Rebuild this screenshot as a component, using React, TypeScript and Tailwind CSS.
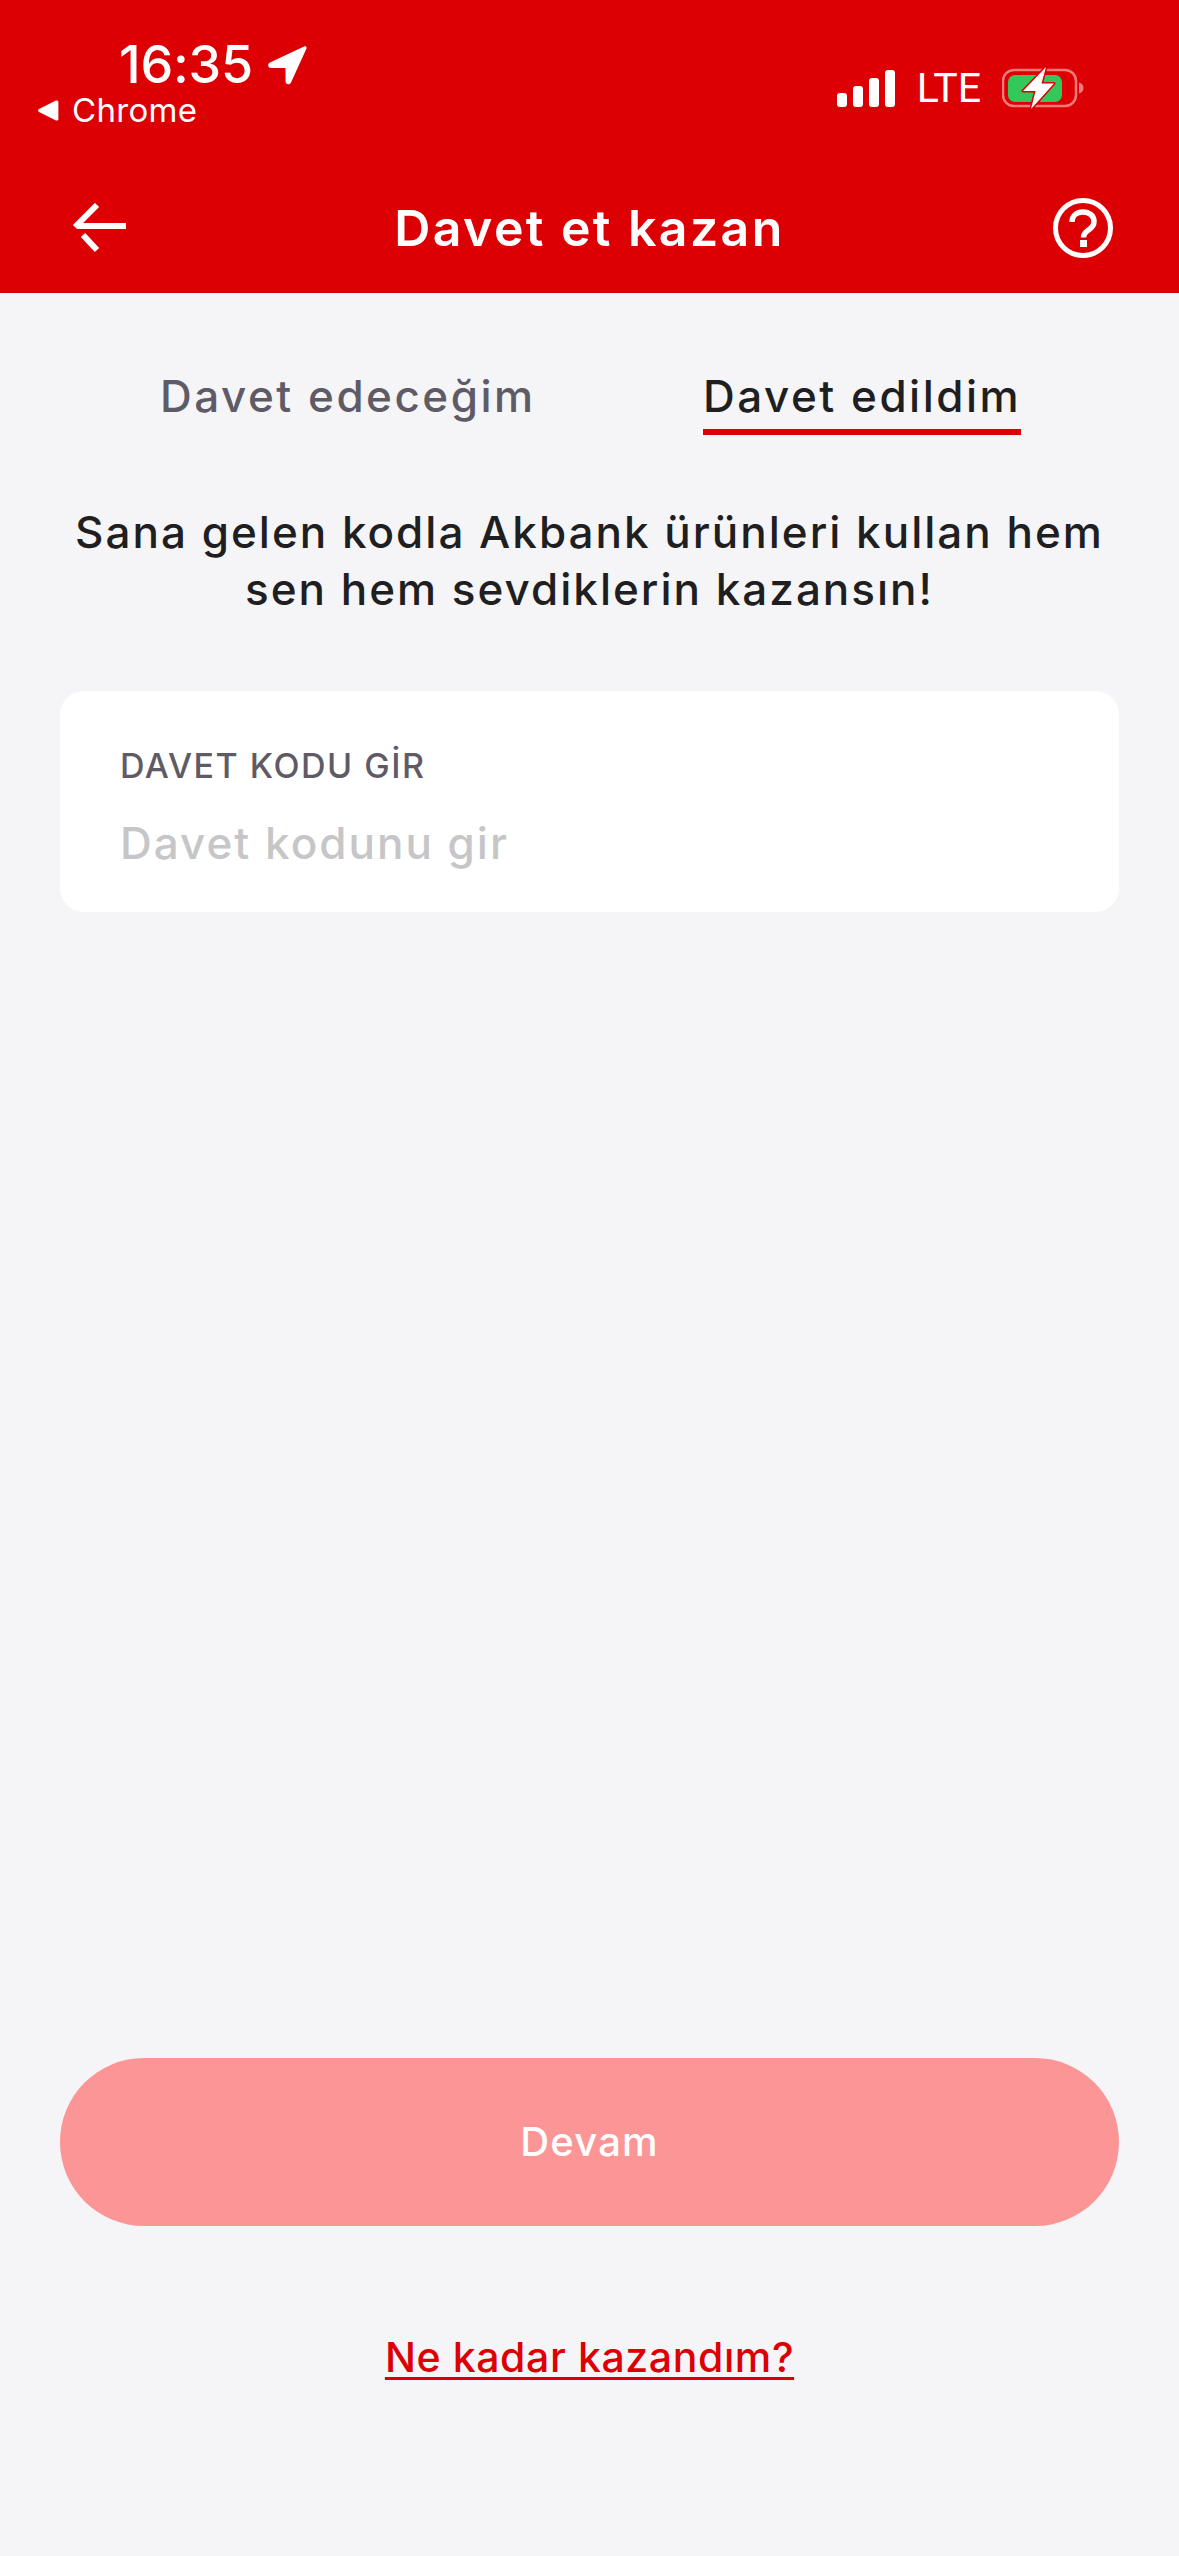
const sans = "font-['Inter','Liberation_Sans',sans-serif]";

function LocationArrow() {
  return (
    <svg width="40" height="40" viewBox="0 0 40 40" className="block">
      <path d="M37 1.5 3 17.5c-3 1.500-2 5.500 1 5.500h13.500c.8 0 1 .3 1 1V36c0 3.500 4 4.500 5.500 1.500L39.500 3.500C40 1.800 38.500.8 37 1.500Z" fill="#fff" />
    </svg>
  );
}

function BackTriangle() {
  return (
    <svg width="21" height="21" viewBox="0 0 21 21" className="block">
      <path d="M1 9 18 .6c1.200-.5 2.400.2 2.400 1.500v16.800c0 1.300-1.200 2-2.400 1.500L1 12c-1.300-.7-1.300-2.300 0-3Z" fill="#fff" />
    </svg>
  );
}

function Signal() {
  return (
    <svg width="58" height="37" viewBox="0 0 58 37" className="block" fill="#fff">
      <rect x="0" y="23" width="10" height="14" rx="3" />
      <rect x="16" y="16" width="10" height="21" rx="3" />
      <rect x="32" y="8" width="10" height="29" rx="3" />
      <rect x="48" y="0" width="10" height="37" rx="3" />
    </svg>
  );
}

function Battery() {
  return (
    <svg width="84" height="42" viewBox="0 0 84 42" className="block">
      <rect x="1" y="3" width="73" height="36" rx="11" fill="none" stroke="#f27a7d" strokeWidth="2.500" />
      <path d="M77 15.500c3 .8 4.500 3 4.500 5.500s-1.500 4.700-4.500 5.500Z" fill="#f27a7d" />
      <rect x="6" y="8" width="54" height="27" rx="7" fill="#34c759" />
      <path d="M44 0 21 24h12.500L29 42l23-25.500H39.500Z" fill="#fff" stroke="#dc0005" strokeWidth="3" strokeLinejoin="round" paintOrder="stroke" />
    </svg>
  );
}

function BackArrow() {
  return (
    <svg width="54" height="50" viewBox="0 0 54 50" className="block" fill="none" stroke="#fff" strokeWidth="6">
      <path d="M54 23H5" />
      <path d="M25 2 3 24" />
      <path d="M11 32 25 47" />
    </svg>
  );
}

function HelpIcon() {
  return (
    <svg width="60" height="60" viewBox="0 0 60 60" className="block" fill="none">
      <circle cx="30" cy="30" r="27.500" stroke="#fff" strokeWidth="5" />
      <path d="M19 24c0-6 4.500-10 11-10s11 4 11 9.500c0 4.500-2.500 6.500-5.500 8.500-3 2-5 3.500-5 7.500" stroke="#fff" strokeWidth="5.500" />
      <rect x="27" y="42" width="7" height="7" fill="#fff" />
    </svg>
  );
}

export default function App() {
  return (
    <div className={`flex h-[2556px] w-[1179px] flex-col overflow-hidden bg-[#f5f5f8] ${sans}`}>
      <header className="flex h-[293px] flex-col bg-[#dc0005] text-white">
        <div className="flex h-[134px] items-start justify-between">
          <div className="flex flex-col pl-[38px] pt-[36px]">
            <div className="flex h-[58px] items-center gap-[14px] pl-[81px]">
              <span className="text-[52px] leading-[58px] font-medium tracking-[-0.2px]">16:35</span>
              <LocationArrow />
            </div>
            <div className="flex h-[32px] items-center gap-[13px]">
              <BackTriangle />
              <span className="text-[33px] leading-[32px] font-normal tracking-[0.3px]">Chrome</span>
            </div>
          </div>
          <div className="flex items-center pr-[93px] pt-[67px]">
            <div className="pt-[1px]"><Signal /></div>
            <span className="ml-[22px] font-['Roboto',sans-serif] text-[41px] leading-[42px] font-normal">LTE</span>
            <div className="ml-[21px]"><Battery /></div>
          </div>
        </div>
        <div className="relative flex h-[159px] items-start justify-center pt-[67px]">
          <div className="absolute left-[72px] top-[69px]"><BackArrow /></div>
          <h1 className="text-[50px] leading-[54px] font-semibold tracking-[2.4px]">Davet et kazan</h1>
          <div className="absolute right-[66px] top-[64px]"><HelpIcon /></div>
        </div>
      </header>

      <main className="flex flex-1 flex-col px-[60px]">
        <div className="flex h-[141px] items-start pt-[76px] text-[44px] leading-[54px] font-medium tracking-[2.5px]">
          <div className="w-[643px] pl-[100px] text-[#5f5b66]">Davet edeceğim</div>
          <div className="border-b-[6px] border-[#dc0005] pb-[6px] text-[#1f1f21]">Davet edildim</div>
        </div>
        <p className="mt-[70px] text-center text-[44px] leading-[57px] font-medium tracking-[2px] text-[#1f1f21]">
          Sana gelen kodla Akbank ürünleri kullan hem<br />sen hem sevdiklerin kazansın!
        </p>
        <div className="mt-[73px] flex h-[221px] flex-col rounded-[24px] bg-white pl-[60px] pt-[55px]">
          <div className="text-[34px] leading-[40px] font-medium tracking-[1.5px] text-[#5f5b66]">DAVET KODU GİR</div>
          <div className="mt-[32px] text-[44px] leading-[50px] font-medium tracking-[2px] text-[#c6c6c8]">Davet kodunu gir</div>
        </div>
        <button className="mt-auto flex h-[168px] items-center justify-center rounded-full bg-[#fc9696] text-[40px] font-medium tracking-[1.2px] text-white">
          Devam
        </button>
        <a className="mb-[174px] mt-[106px] self-center text-[41px] leading-[50px] font-medium tracking-[0.6px] text-[#dc0005] underline decoration-[3px] underline-offset-[5px]">
          Ne kadar kazandım?
        </a>
      </main>
    </div>
  );
}
